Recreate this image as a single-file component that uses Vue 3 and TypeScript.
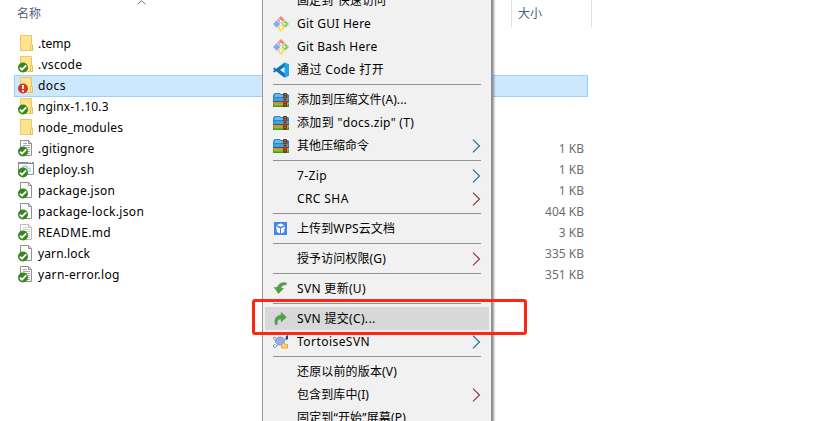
<script setup lang="ts">
type FileKind = 'folder' | 'text' | 'script' | 'blank' | 'faded'
interface FileRow {
  name: string
  kind: FileKind
  badge?: 'ok' | 'modified'
  size?: string
  selected?: boolean
  spacing?: number
}
interface MenuRow {
  label?: string
  icon?: string
  arrow?: boolean
  warm?: boolean
  active?: boolean
  spacing?: number
}

const files: FileRow[] = [
  { name: '.temp', kind: 'folder' },
  { name: '.vscode', kind: 'folder', badge: 'ok', spacing: 0.28 },
  { name: 'docs', kind: 'folder', badge: 'modified', selected: true, spacing: 0.45 },
  { name: 'nginx-1.10.3', kind: 'folder', badge: 'ok', spacing: 0.1 },
  { name: 'node_modules', kind: 'folder', spacing: 0.17 },
  { name: '.gitignore', kind: 'text', badge: 'ok', size: '1 KB', spacing: 0.18 },
  { name: 'deploy.sh', kind: 'script', badge: 'ok', size: '1 KB', spacing: 0.3 },
  { name: 'package.json', kind: 'blank', badge: 'ok', size: '1 KB', spacing: 0.27 },
  { name: 'package-lock.json', kind: 'blank', badge: 'ok', size: '404 KB', spacing: 0.35 },
  { name: 'README.md', kind: 'faded', badge: 'ok', size: '3 KB', spacing: 0.35 },
  { name: 'yarn.lock', kind: 'blank', badge: 'ok', size: '335 KB', spacing: 0.12 },
  { name: 'yarn-error.log', kind: 'text', badge: 'ok', size: '351 KB', spacing: 0.36 },
]

const menu: MenuRow[] = [
  { label: '固定到“快速访问”', spacing: 0.1 },
  { label: 'Git GUI Here', icon: 'git', spacing: 0.25 },
  { label: 'Git Bash Here', icon: 'git', spacing: 0.25 },
  { label: '通过 Code 打开', icon: 'code', spacing: 0.38 },
  {},
  { label: '添加到压缩文件(A)...', icon: 'rar', spacing: 0.1 },
  { label: '添加到 "docs.zip" (T)', icon: 'rar', spacing: 0.33 },
  { label: '其他压缩命令', icon: 'rar', arrow: true },
  {},
  { label: '7-Zip', arrow: true, spacing: 0.4 },
  { label: 'CRC SHA', arrow: true, warm: true, spacing: 0.4 },
  {},
  { label: '上传到WPS云文档', icon: 'wps', spacing: 0.12 },
  {},
  { label: '授予访问权限(G)', arrow: true, warm: true, spacing: 0.1 },
  {},
  { label: 'SVN 更新(U)', icon: 'update', spacing: 0.32 },
  {},
  { label: 'SVN 提交(C)...', icon: 'commit', active: true, spacing: 0.34 },
  { label: 'TortoiseSVN', icon: 'tortoise', arrow: true, spacing: 0.45 },
  {},
  { label: '还原以前的版本(V)', spacing: 0.15 },
  { label: '包含到库中(I)', arrow: true, warm: true, spacing: 0.1 },
  { label: '固定到“开始”屏幕(P)', spacing: 0.15 },
]

const tracking = (row: { spacing?: number }) => ({ letterSpacing: `${row.spacing ?? 0}px` })
</script>

<template>
  <div class="explorer">
    <header class="columns">
      <span class="col-name">名称
        <svg class="sort" width="9" height="5" viewBox="0 0 9 5"><path d="M.5 4.5 4.5.5l4 4" fill="none" stroke="#777" /></svg>
      </span>
      <span class="col-size">大小</span>
    </header>

    <div class="files">
      <div v-for="f in files" :key="f.name" class="file" :class="{ selected: f.selected }">
        <svg class="file-icon" width="17" height="17" viewBox="0 0 17 17">
          <g v-if="f.kind === 'folder'">
            <path d="M2.5.5h11v9h1v6h-12z" fill="#ffe391" stroke="#edca58" />
            <path d="M12.5 15v-4.5q0-1 1-1t1 1v5h-2z" fill="#ffe9a5" stroke="#e8c04b" />
          </g>
          <g v-else-if="f.kind === 'script'">
            <path d="M.5 1.500h15v12H.5z" fill="#f7f9fb" stroke="#8b929a" />
            <path d="M0 1h16v2H0z" fill="#8b929a" />
            <path d="M11 1.500h1m1 0h1" stroke="#fff" />
            <circle cx="7" cy="7.500" r="2.500" fill="none" stroke="#a5b3be" stroke-width="1.200" />
            <circle cx="10.500" cy="9" r="2" fill="#d8edf8" stroke="#a8cfe3" />
          </g>
          <g v-else :opacity="f.kind === 'faded' ? 0.6 : 1">
            <path d="M2.500.5h8l3 3v12h-11z" fill="#fff" stroke="#909090" />
            <path d="M10.500.5v3h3" fill="none" stroke="#909090" />
            <path v-if="f.kind !== 'blank'" d="M5 3.500h4M5 5.500h7M5 7.500h7M5 9.500h7M5 11.500h7M5 13.500h7" stroke="#a9adb2" />
          </g>
          <g v-if="f.badge === 'ok'">
            <circle cx="5" cy="11.500" r="5" fill="#35871c" />
            <path d="m1.900 11.700 2.100 2 4.200-4.300" fill="none" stroke="#fff" stroke-width="1.800" />
          </g>
          <g v-if="f.badge === 'modified'">
            <circle cx="5" cy="11.500" r="5" fill="#cc3a22" />
            <path d="M5 8v4m0 1.200V15" stroke="#fff" stroke-width="1.800" />
          </g>
        </svg>
        <span class="file-name" :style="tracking(f)">{{ f.name }}</span>
        <span class="file-size">{{ f.size }}</span>
      </div>
    </div>

    <nav class="menu">
      <template v-for="(m, i) in menu" :key="i">
        <div v-if="!m.label" class="separator"></div>
        <div v-else class="item" :class="{ active: m.active }">
          <svg class="item-icon" width="16" height="16" viewBox="0 0 16 16">
            <g v-if="m.icon === 'git'">
              <path d="m8 0 3.700 3.700L8 7.400 4.300 3.700z" fill="#f28585" />
              <path d="m3.700 4.300 3.700 3.700-3.700 3.700L0 8z" fill="#7facf9" />
              <path d="M12.300 4.300 16 8l-3.700 3.700L8.600 8z" fill="#86d35f" />
              <path d="m8 8.600 3.700 3.700L8 16l-3.700-3.700z" fill="#fddc64" />
              <path d="M5.500 2.500 8 5v7M8 5l3.500 3" fill="none" stroke="#f8f4ee" stroke-width=".8" />
              <circle cx="8" cy="5" r=".9" fill="#fff" /><circle cx="11.500" cy="8" r=".9" fill="#fff" /><circle cx="8" cy="12" r=".9" fill="#fff" />
            </g>
            <g v-else-if="m.icon === 'code'">
              <path d="M11.500.5 4 7.700 1.500 5.500.3 6.200v.8l10.900 8.500 1.300-.5V5z" fill="#0878bd" />
              <path d="M11.500.5 4 8.200l-2.500 2.300-1.200-.7V9L11.500.5z" fill="#0b6ab0" />
              <path d="M11.500.3 16 2.200v11.600l-4.500 2z" fill="#21a3ee" />
              <path d="m11.500 4.700-4.300 3.300 4.300 3.300z" fill="#f1f1f1" />
            </g>
            <g v-else-if="m.icon === 'rar'">
              <path d="M0 0h16v15H0z" fill="#fff" />
              <path d="M0 3 1.500 1H7l1 1h7l1 1v7H0z" fill="#2585c8" />
              <path d="M2 2h5l1 1h6v2H1z" fill="#62bcf0" />
              <path d="M1 6h14v3H1z" fill="#3ea3e3" />
              <path d="M0 9h16v1H0z" fill="#1b5f96" />
              <path d="M0 10h16v2H0z" fill="#f58020" />
              <path d="M0 12h16v3H0z" fill="#3f9c1e" />
              <path d="M1 12h14v1.500H1z" fill="#80ca36" />
              <path d="M10 1h4v14h-4z" fill="#7c3e1c" />
              <path d="M12 2v3m0 5v4" stroke="#c18449" stroke-dasharray="1 1" />
              <path d="M10.500 6.500h3v2h-3z" fill="#4c2818" stroke="#b58559" stroke-width=".7" />
            </g>
            <g v-else-if="m.icon === 'wps'">
              <path d="M1 1h13v13H1z" fill="#4285ed" />
              <path d="m3.500 4.200 4-1.600 4 1.600-4 1.600z" fill="#fff" />
              <path d="m3 5.500 4 1.700v5.200L3.800 11V8L3 7.500zm9 0L8 7.200v5.200l3.200-1.400V8l.8-.5z" fill="#fff" />
            </g>
            <g v-else-if="m.icon === 'update'">
              <path d="M13.300 2C8.500.8 5.200 3.200 4.200 6.500H1.300L5.500 12.500 10.500 7.500H7.900c.2-2.500 2-4.100 5.400-3.800z" fill="#42ab31" stroke="#76837a" stroke-width=".7" />
            </g>
            <g v-else-if="m.icon === 'commit'">
              <path d="M2.500 13.500C.7 8 3.500 4.200 8.300 4.200V1.500l5 4.700-5 4.600V8C5.200 7.800 3.600 9.500 4.300 13.500z" fill="#42ab31" stroke="#76837a" stroke-width=".7" />
            </g>
            <g v-else-if="m.icon === 'tortoise'">
              <path d="m3 4-2-1-1 1.500L3 7m-1 3-2 2 2 2 3-3m6-5 3-2" fill="#d9e9f7" stroke="#7e9eb8" />
              <ellipse cx="7" cy="7" rx="4.500" ry="4" fill="#91afeb" stroke="#7589b9" stroke-width=".8" />
              <path d="m12.500 5 .5-3 2-1v4l-1.500 1z" fill="#214e7c" />
              <path d="M8.500 10.500q2-3 3.500-.5l2.500.5v3.500h-6z" fill="#ffd556" stroke="#c99b3c" stroke-width=".8" />
            </g>
          </svg>
          <span class="label" :style="tracking(m)">{{ m.label }}</span>
          <svg v-if="m.arrow" class="arrow" :class="{ warm: m.warm }" width="9" height="14" viewBox="0 0 9 14">
            <path d="m1 .7 6.500 6.300L1 13.300" fill="none" stroke="currentColor" stroke-width="1.100" />
          </svg>
        </div>
      </template>
    </nav>
    <div class="callout"></div>
  </div>
</template>

<style>
body {
  overflow: hidden;
  background: #fff;
}
</style>

<style scoped>
.explorer {
  position: relative;
  width: 827px;
  height: 421px;
  overflow: hidden;
  background: #fff;
  color: #000;
  font: 12px/21px "Noto Sans", "Noto Sans CJK SC", sans-serif;
  white-space: nowrap;
}
.columns {
  display: flex;
  height: 27px;
  color: #4c607a;
}
.col-name {
  position: relative;
  width: 494px;
  padding: 3px 0 0 17px;
  border-right: 1px solid #e2e2e2;
}
.sort {
  position: absolute;
  left: 137px;
  top: 0;
}
.col-size {
  width: 73px;
  padding: 3px 0 0 6px;
  border-right: 1px solid #e2e2e2;
}
.files {
  width: 574px;
  padding: 6px 0 0 14px;
}
.file {
  box-sizing: border-box;
  display: flex;
  height: 21px;
  padding: 0 4px;
}
.selected {
  height: 22px;
  margin-bottom: -1px;
  background: #cce8ff;
  box-shadow: inset 0 0 0 1px #99d1ff;
}
.file-icon {
  margin-top: 2px;
  flex: none;
}
.file-name {
  flex: 1;
  margin-left: 3px;
}
.file-size {
  color: #6d6d6d;
}
.menu {
  position: absolute;
  box-sizing: border-box;
  left: 262px;
  top: -12px;
  width: 231px;
  height: 445px;
  padding-top: 1px;
  border-left: 1px solid #999;
  border-right: 2px solid #929292;
  background: #f1f1f1;
  box-shadow: 1px 0 2px 0 rgba(0, 0, 0, 0.4);
  clip-path: inset(0 -8px 0 0);
}
.item {
  display: flex;
  align-items: center;
  height: 23px;
  margin: 0 2px;
  padding: 0 8px;
  line-height: 23px;
}
.active {
  background: #d8d8d8;
}
.item-icon {
  flex: none;
}
.label {
  flex: 1;
  margin-left: 8px;
}
.arrow {
  color: #176d93;
}
.warm {
  color: #8b3037;
}
.separator {
  height: 1px;
  margin: 3px 10px;
  background: #919191;
}
.callout {
  position: absolute;
  box-sizing: border-box;
  left: 252px;
  top: 299px;
  width: 275px;
  height: 36px;
  border: 3px solid #ff2516;
  border-radius: 3px;
}
</style>
